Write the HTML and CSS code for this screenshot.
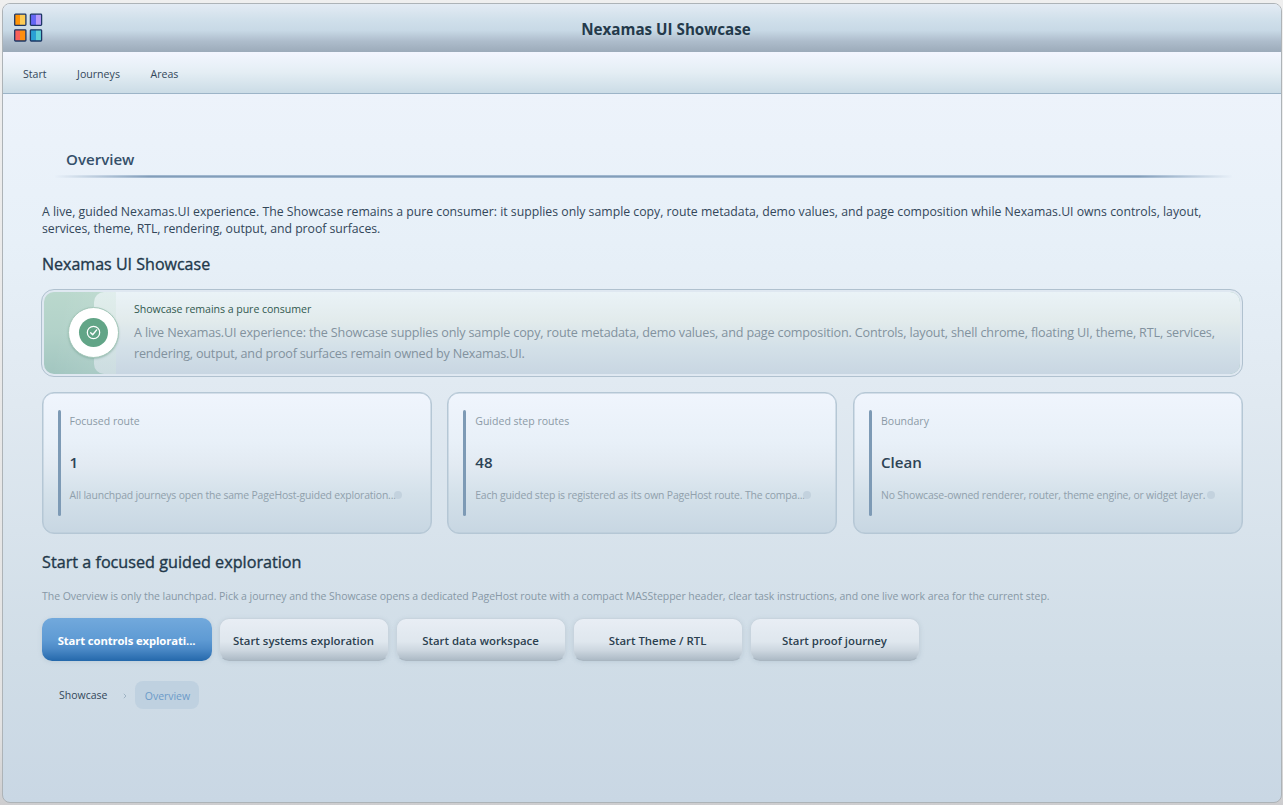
FILE: index.html
```html
<!DOCTYPE html>
<html lang="en">
<head>
<meta charset="utf-8">
<title>Nexamas UI Showcase</title>
<link rel="stylesheet" href="styles.css">
</head>
<body>
<div class="window">
  <header class="titlebar">
    <svg class="logo" width="30" height="30" viewBox="0 0 30 30">
      <defs>
        <linearGradient id="tile-a"><stop offset=".5" stop-color="#ff9408"/><stop offset=".5" stop-color="#fccb55"/></linearGradient>
        <linearGradient id="tile-b"><stop offset=".5" stop-color="#6466f4"/><stop offset=".5" stop-color="#b79cf8"/></linearGradient>
        <linearGradient id="tile-c"><stop offset=".5" stop-color="#f9605a"/><stop offset=".5" stop-color="#ff8e10"/></linearGradient>
        <linearGradient id="tile-d"><stop offset=".5" stop-color="#2aa0d4"/><stop offset=".5" stop-color="#5fd0d6"/></linearGradient>
      </defs>
      <g stroke="#1d3766" stroke-width="1.3">
        <rect x="1.7" y="1.2" width="11.2" height="11.2" rx=".8" fill="url(#tile-a)"/>
        <rect x="17.4" y="1.2" width="11.2" height="11.2" rx=".8" fill="url(#tile-b)"/>
        <rect x="1.7" y="16.8" width="11.2" height="11.2" rx=".8" fill="url(#tile-c)"/>
        <rect x="17.4" y="16.8" width="11.2" height="11.2" rx=".8" fill="url(#tile-d)"/>
      </g>
    </svg>
    <div class="title">Nexamas UI Showcase</div>
  </header>
  <nav class="menu"><a>Start</a><a>Journeys</a><a>Areas</a></nav>
  <main class="page">
    <div class="section-title">Overview</div>
    <div class="rule"></div>
    <p class="intro">A live, guided Nexamas.UI experience. The Showcase remains a pure consumer: it supplies only sample copy, route metadata, demo values, and page composition while Nexamas.UI owns controls, layout,<br><span class="intro-end">services, theme, RTL, rendering, output, and proof surfaces.</span></p>
    <h2 class="heading">Nexamas UI Showcase</h2>
    <section class="notice">
      <div class="notice-inner">
        <div class="notice-side">
          <div class="badge"><div class="badge-dot">
            <svg width="15" height="15" viewBox="0 0 16 16" fill="none" stroke="#fff" stroke-linecap="round" stroke-linejoin="round"><circle cx="8" cy="8" r="6.6" stroke-width="1.3"/><path d="M5 8.3 7.1 10.4 11.4 5.2" stroke-width="1.5"/></svg>
          </div></div>
        </div>
        <div class="notice-body">
          <div class="notice-title">Showcase remains a pure consumer</div>
          <div class="notice-text">A live Nexamas.UI experience: the Showcase supplies only sample copy, route metadata, demo values, and page composition. Controls, layout, shell chrome, floating UI, theme, RTL, services,<br><span class="notice-end">rendering, output, and proof surfaces remain owned by Nexamas.UI.</span></div>
        </div>
      </div>
    </section>
    <div class="cards">
      <article class="card"><div class="card-bar"></div><div class="card-body">
        <div class="card-label">Focused route</div><div class="card-value">1</div>
        <div class="card-desc">All launchpad journeys open the same PageHost-guided exploration...<i class="dot overlap"></i></div></div></article>
      <article class="card"><div class="card-bar"></div><div class="card-body">
        <div class="card-label">Guided step routes</div><div class="card-value">48</div>
        <div class="card-desc">Each guided step is registered as its own PageHost route. The compa...<i class="dot overlap"></i></div></div></article>
      <article class="card"><div class="card-bar"></div><div class="card-body">
        <div class="card-label">Boundary</div><div class="card-value">Clean</div>
        <div class="card-desc">No Showcase-owned renderer, router, theme engine, or widget layer.<i class="dot"></i></div></div></article>
    </div>
    <h2 class="heading launch">Start a focused guided exploration</h2>
    <p class="note">The Overview is only the launchpad. Pick a journey and the Showcase opens a dedicated PageHost route with a compact MASStepper header, clear task instructions, and one live work area for the current step.</p>
    <div class="actions">
      <button class="btn primary">Start controls explorati...</button>
      <button class="btn">Start systems exploration</button>
      <button class="btn">Start data workspace</button>
      <button class="btn">Start Theme / RTL</button>
      <button class="btn">Start proof journey</button>
    </div>
    <div class="crumbs"><span class="crumb">Showcase</span><svg class="chevron" width="4" height="6" viewBox="0 0 4 6"><path d="M.8.8 3 3 .8 5.2" fill="none" stroke="#9aafc0" stroke-width=".9"/></svg><span class="crumb current">Overview</span></div>
  </main>
</div>
</body>
</html>
```
FILE: styles.css
```css
* { box-sizing: border-box; }
body {
  margin: 0;
  height: 805px;
  padding: 3px 1px 2px 2px;
  overflow: hidden;
  background: linear-gradient(#efefef, #e3e3e3 90%, #cdcdcf);
  font-family: "Open Sans", "Noto Sans", sans-serif;
  color: #33475a;
  white-space: nowrap;
}
.window {
  height: 800px;
  border: 1px solid #adb3b7;
  border-radius: 8px;
  overflow: hidden;
  background: linear-gradient(#f0f4fd 0, #edf3fb 11%, #e7f0f8 30%, #e0e9f1 50%, #d0dde7 82%, #c9d7e4 100%);
}
.titlebar {
  height: 48px;
  display: grid;
  grid-template-columns: 48px 1fr;
  align-items: center;
  padding-left: 10px;
  background: linear-gradient(#e3ebf4 0, #cfdfea 35%, #c8d9e6 55%, #adbccb 78%, #9cabba 100%);
}
.title {
  justify-self: center;
  margin-left: -10px;
  padding-top: 1px;
  font: 700 15.2px "Open Sans", sans-serif;
  color: #243a4b;
}
.menu {
  height: 42px;
  display: flex;
  align-items: center;
  gap: 30.5px;
  padding: 3px 0 0 20px;
  border-bottom: 1px solid #9cb4c7;
  background: linear-gradient(#f3f6ff 0, #e4eef4 50%, #cbdce6 100%);
  font-size: 10.6px;
}
.page { padding: 53px 38px 0 39px; }
.section-title {
  height: 24px;
  padding-left: 24px;
  line-height: 24px;
  font-size: 15.1px;
  font-weight: 600;
  color: #35506a;
}
.rule {
  height: 3px;
  margin: 4px 10px 0 12px;
  background: linear-gradient(#adc2d9, #839eb9 50%, #adc2d9);
  -webkit-mask-image: linear-gradient(90deg, transparent, #000 8%, #000 92%, transparent);
  mask-image: linear-gradient(90deg, transparent, #000 8%, #000 92%, transparent);
}
.intro {
  margin: 25px 0 0;
  font-size: 12.27px;
  line-height: 17px;
}
.intro-end { letter-spacing: -.04px; }
.heading {
  margin: 15px 0 0;
  height: 24px;
  font-size: 16.05px;
  font-weight: 500;
  line-height: 24px;
  color: #22384a;
  -webkit-text-stroke: .35px #22384a;
}
.notice {
  height: 88px;
  margin: 13px 0 0 -1px;
  padding: 2px;
  border: 1px solid #b0c1cf;
  border-radius: 13px;
  background: #dfe8f1;
}
.notice-inner {
  position: relative;
  height: 82px;
  display: flex;
  border-radius: 10px;
  overflow: hidden;
  background: linear-gradient(100deg, #0000 20px, #ffffff14 60px), linear-gradient(#bad8cd, #b2d2c9 50%, #a2c6c0);
}
/* Pale sheet with rounded left corners, under the badge and the text */
.notice-inner::before {
  content: "";
  position: absolute;
  inset: 0 0 0 50px;
  border-radius: 10px;
  background:
    linear-gradient(#d2e6de66, #d2e6de66) 0 0 / 22px 100% no-repeat,
    linear-gradient(#eaf3f7 0, #e2ebec 35%, #d3e0e8 68%, #c8d6e2 100%);
}
.notice-side {
  position: relative;
  width: 74px;
  padding: 15px 0 0 24px;
}
.badge {
  width: 51px;
  height: 51px;
  display: grid;
  place-items: center;
  border: 1px solid #a4c7b9;
  border-radius: 50%;
  background: #fff;
  box-shadow: 0 1px 2px #6d9b8d80;
}
.badge-dot {
  width: 29px;
  height: 29px;
  display: grid;
  place-items: center;
  border-radius: 50%;
  background: #62a587;
}
.notice-body { position: relative; padding: 9px 0 0 16px; }
.notice-title {
  height: 16px;
  line-height: 16px;
  font-size: 10.6px;
  letter-spacing: -.05px;
  color: #31594f;
}
.notice-text {
  margin-top: 5px;
  font-size: 12.6px;
  letter-spacing: -.155px;
  line-height: 21px;
  color: #82929e;
}
.notice-end { letter-spacing: -.2px; }
.cards {
  display: grid;
  grid-template-columns: repeat(3, 390px);
  justify-content: space-between;
  margin: 15px 0 0 -.5px;
}
.card {
  height: 142px;
  display: flex;
  gap: 9px;
  padding: 17px 0 0 15px;
  border: 1px solid #b5c7d5;
  border-radius: 12px;
  box-shadow: inset 0 0 0 .5px #b5c7d5;
  background: linear-gradient(#f0f5fd 0, #e8f0f8 35%, #e2eaf2 52%, #d4e1ea 72%, #c7d6e2 100%) border-box;
}
.card-bar {
  width: 3px;
  height: 106px;
  border-radius: 1.5px;
  background: #7d9ab5;
}
.card-label {
  margin-top: 3px;
  height: 16px;
  line-height: 16px;
  font-size: 10.54px;
  color: #8b9aa6;
}
.card-value {
  margin-top: 22px;
  height: 22px;
  line-height: 22px;
  font-size: 15.1px;
  font-weight: 600;
  color: #2d4355;
}
.card-desc {
  display: flex;
  align-items: center;
  margin-top: 14px;
  height: 16px;
  font-size: 10.4px;
  letter-spacing: -.155px;
  color: #90a0ac;
}
.dot {
  width: 8px;
  height: 8px;
  margin-left: 2px;
  border-radius: 50%;
  background: #c3d2de;
}
.dot.overlap { margin-left: -2px; }
.launch { margin-top: 16px; font-size: 16.2px; }
.note {
  margin: 14px 0 0;
  height: 16px;
  line-height: 16px;
  font-size: 10.5px;
  letter-spacing: -.045px;
  color: #8798a6;
}
.actions {
  display: flex;
  gap: 7px;
  margin: 14px 0 0 -.5px;
}
.btn {
  width: 170px;
  height: 43px;
  padding: 2px 0 0;
  border: 1px solid #c8d4de;
  border-bottom-color: #a9b6c1;
  border-radius: 10px;
  background: linear-gradient(#e9eef5 0, #dfe7ee 55%, #cdd7e0 75%, #a9b7c3 100%) border-box;
  box-shadow: 0 1px 4px #91a5b54d;
  font: 600 11.4px "Open Sans", sans-serif;
  white-space: nowrap;
  color: #2b404f;
}
.btn.primary {
  border: 0;
  background: linear-gradient(#72a9dc 0, #5f9bd4 50%, #4c8ac7 72%, #2468ab 100%);
  font-weight: 700;
  font-size: 11.3px;
  letter-spacing: -.12px;
  color: #fff;
}
.crumbs {
  display: flex;
  align-items: center;
  height: 28px;
  margin: 20px 0 0 17px;
  font-size: 10.5px;
}
.crumb { line-height: 29px; padding-top: 1px; }
.chevron { margin: 2px 8px 0 16px; }
.crumb.current {
  width: 64px;
  height: 28px;
  text-align: center;
  border-radius: 8px;
  background: #bfd1e0;
  color: #6c9bc9;
  letter-spacing: -.05px;
}
```
